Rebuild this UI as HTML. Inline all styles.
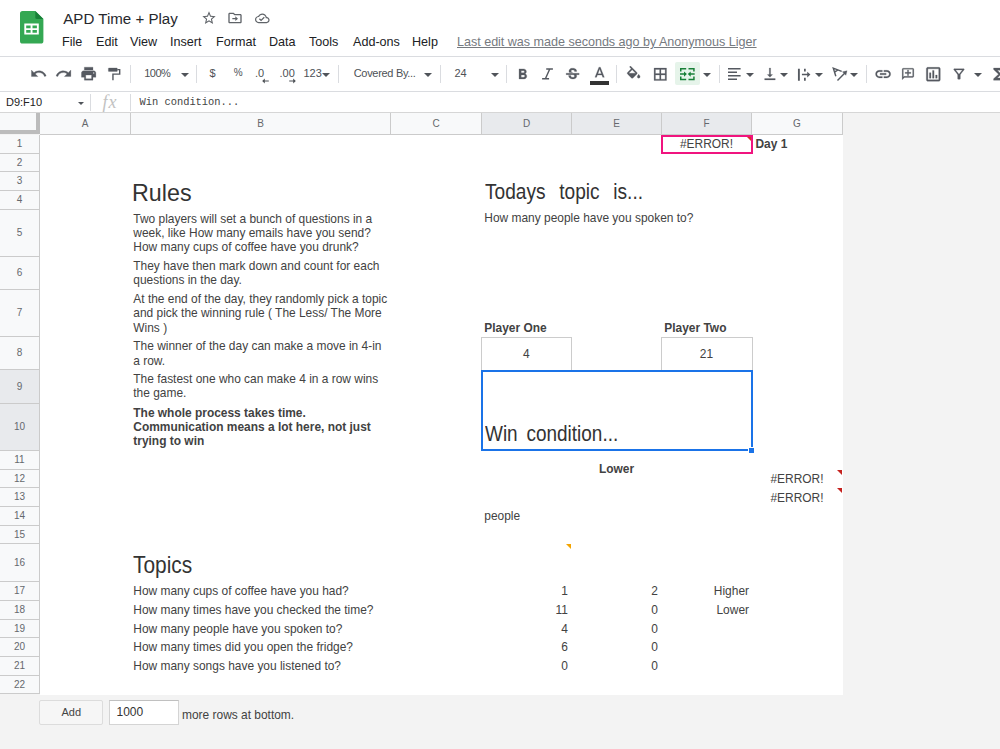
<!DOCTYPE html>
<html lang="en">
<head>
<meta charset="utf-8">
<title>APD Time + Play</title>
<style>
*{box-sizing:border-box;margin:0;padding:0}
html,body{width:1000px;height:749px;overflow:hidden;background:#fff}
body{position:relative;font-family:"Liberation Sans",Arial,sans-serif;font-size:12px;color:#333;line-height:1}
.abs{position:absolute}
.t{position:absolute;white-space:nowrap;line-height:1}
#title{left:63.3px;top:8.5px;font-size:15.1px;color:#26282c;height:20px;line-height:20px}
.menu{position:absolute;white-space:nowrap;top:35px;font-size:12.6px;color:#202124;height:15px;line-height:15px}
#lastedit{left:457px;color:#767a7f;text-decoration:underline;letter-spacing:-0.03px}
.hline{position:absolute;left:0;width:1000px;height:1px;background:#dadce0}
.sep{position:absolute;top:65px;width:1px;height:18px;background:#dadce0}
.tb{position:absolute;white-space:nowrap;color:#4d5156;font-size:11px;line-height:14px;height:14px;top:66px}
.dd{position:absolute;width:0;height:0;border-left:4.2px solid transparent;border-right:4.2px solid transparent;border-top:4.2px solid #50545a;top:72.8px;margin-left:-0.7px}
svg{position:absolute;overflow:visible}
#namebox{left:6px;top:96px;font-size:11px;color:#222;height:13px;line-height:13px}
#fx{left:102.5px;top:91.5px;font-family:"Liberation Serif",serif;font-style:italic;font-size:18px;letter-spacing:1px;color:#c2c2c2;height:20px;line-height:20px}
#formula{left:139.5px;top:96px;font-family:"Liberation Mono",monospace;font-size:10.4px;color:#444;height:13px;line-height:13px}
#gray{left:0;top:112px;width:1000px;height:637px;background:#f3f3f3}
#sheet{left:40px;top:135px;width:803px;height:560px;background:#fff}
#corner{left:0;top:112px;width:40px;height:22px;background:#f8f9fa;border-right:4px solid #bcbcbc;border-bottom:4px solid #bcbcbc;border-top:1px solid #d5d5d5}
.ch{position:absolute;top:112px;height:23px;background:#f8f9fa;border-right:1px solid #cbcbcb;border-bottom:1px solid #cbcbcb;border-top:1px solid #d5d5d5;color:#65686d;font-size:10px;text-align:center;line-height:22px}
.ch.sel,.rh.sel{background:#e8eaed}
.rh{position:absolute;left:0;width:40px;background:#f8f9fa;border-right:1px solid #cbcbcb;border-bottom:1px solid #cbcbcb;color:#65686d;font-size:10px;text-align:center}
.c{position:absolute;white-space:nowrap;font-size:11.95px;line-height:14px;height:14px;color:#424242}
.b{font-weight:bold}
.r{text-align:right}
.hw{position:absolute;white-space:nowrap;color:#333;transform-origin:0 0}
svg.ic{fill:#555960;stroke:#555960;stroke-width:0.35}
svg.ti{fill:#5f6368}
</style>
</head>
<body>
<!-- title bar -->
<svg style="left:19.6px;top:11.3px" width="23.4" height="32.5" viewBox="0 0 23.4 32.5">
  <path d="M2.6 0H15.3L23.4 8.1V29.9a2.6 2.6 0 0 1-2.6 2.6H2.6A2.6 2.6 0 0 1 0 29.9V2.6A2.6 2.6 0 0 1 2.6 0Z" fill="#34a853"/>
  <path d="M15.3 0L23.4 8.1H17a1.7 1.7 0 0 1-1.700-1.700Z" fill="#188038"/>
  <path d="M4.300 12.600H18.800V23.600H4.300Z M6.200 14.500V17.200H10.600V14.500Z M12.500 14.500V17.200H16.900V14.500Z M6.200 19V21.700H10.600V19Z M12.500 19V21.700H16.900V19Z" fill="#fff" fill-rule="evenodd"/>
</svg>
<svg class="ti" style="left:201px;top:10.100px" width="16" height="16" viewBox="0 0 24 24"><path d="M22 9.240l-7.190-.62L12 2 9.190 8.630 2 9.240l5.460 4.730L5.820 21 12 17.270 18.180 21l-1.630-7.030L22 9.240zM12 15.400l-3.760 2.270 1-4.280-3.320-2.880 4.380-.38L12 6.100l1.710 4.040 4.380.38-3.320 2.880 1 4.280L12 15.400z"/></svg>
<svg class="ti" style="left:227.400px;top:9.700px" width="16" height="16" viewBox="0 0 24 24"><path d="M20 6h-8l-2-2H4c-1.100 0-2 .9-2 2v12c0 1.100.9 2 2 2h16c1.100 0 2-.9 2-2V8c0-1.100-.9-2-2-2zm0 12H4V6h5.170l2 2H20v10zm-7.500-1.500l4-3.500-4-3.500v2.500H8v2h4.500v2.500z"/></svg>
<svg class="ti" style="left:255.400px;top:10.700px" width="14.600" height="14.600" viewBox="0 0 24 24"><path d="M19.350 10.040C18.670 6.590 15.640 4 12 4 9.110 4 6.600 5.640 5.350 8.040 2.340 8.360 0 10.910 0 14c0 3.310 2.690 6 6 6h13c2.760 0 5-2.240 5-5 0-2.640-2.050-4.780-4.650-4.960zM19 18H6c-2.210 0-4-1.790-4-4 0-2.050 1.530-3.760 3.560-3.970l1.070-.11.500-.95C8.080 7.140 9.940 6 12 6c2.620 0 4.880 1.860 5.390 4.430l.3 1.500 1.530.11c1.560.1 2.780 1.410 2.780 2.960 0 1.650-1.350 3-3 3zm-9-3.820l-2.090-2.090L6.500 13.500 10 17l6.010-6.010-1.410-1.410z"/></svg>
<div class="t" id="title">APD Time + Play</div>
<div class="menu" style="left:62px">File</div>
<div class="menu" style="left:96px">Edit</div>
<div class="menu" style="left:130px">View</div>
<div class="menu" style="left:170px">Insert</div>
<div class="menu" style="left:216px">Format</div>
<div class="menu" style="left:269px">Data</div>
<div class="menu" style="left:309px">Tools</div>
<div class="menu" style="left:353px">Add-ons</div>
<div class="menu" style="left:412px">Help</div>
<div class="menu" id="lastedit">Last edit was made seconds ago by Anonymous Liger</div>
<div class="hline" style="top:56px"></div>

<!-- toolbar -->
<svg class="ic" style="left:30.1px;top:65.2px" width="17.3" height="17.3" viewBox="0 0 24 24"><path d="M12.5 8c-2.65 0-5.05.99-6.9 2.6L2 7v9h9l-3.62-3.62c1.39-1.16 3.16-1.88 5.12-1.88 3.54 0 6.55 2.31 7.6 5.5l2.37-.78C21.08 11.03 17.15 8 12.5 8z"/></svg>
<svg class="ic" style="left:55.0px;top:65.0px" width="17.3" height="17.3" viewBox="0 0 24 24"><path d="M18.4 10.6C16.55 8.99 14.15 8 11.5 8c-4.65 0-8.58 3.03-9.96 7.22L3.9 16c1.05-3.19 4.05-5.5 7.6-5.5 1.95 0 3.73.72 5.12 1.88L13 16h9V7l-3.6 3.6z"/></svg>
<svg class="ic" style="left:79.7px;top:65.4px" width="17.3" height="17.3" viewBox="0 0 24 24"><path d="M19 8H5c-1.66 0-3 1.34-3 3v6h4v4h12v-4h4v-6c0-1.66-1.34-3-3-3zm-3 11H8v-5h8v5zm3-7c-.55 0-1-.45-1-1s.45-1 1-1 1 .45 1 1-.45 1-1 1zm-1-9H6v4h12V3z"/></svg>
<svg class="ic" style="left:105.6px;top:66px" width="16.2" height="16.2" viewBox="0 0 24 24"><path d="M4.300 2.800H16a.8.8 0 0 1 .8.8V7.300a.8.8 0 0 1-.8.8H4.300a.8.8 0 0 1-.8-.8V3.600a.8.8 0 0 1 .8-.8Z"/><path d="M16.700 5.400H20.300V12.100H10.300V21.200" fill="none" stroke="#555960" stroke-width="2.100"/></svg>
<div class="sep" style="left:130px"></div>
<div class="tb" style="left:144.3px;letter-spacing:-0.55px">100%</div>
<div class="dd" style="left:181.5px"></div>
<div class="sep" style="left:196px"></div>
<div class="tb" style="left:209.5px">$</div>
<div class="tb" style="left:233.8px;font-size:10px">%</div>
<div class="tb" style="left:255px">.0</div>
<svg style="left:262px;top:78.3px" width="7" height="6" viewBox="0 0 7 6"><path d="M2.800 0.400L0.200 3L2.800 5.600V3.600H6.800V2.400H2.800Z" fill="#4d5156"/></svg>
<div class="tb" style="left:279.5px">.00</div>
<svg style="left:288.500px;top:78.3px" width="7" height="6" viewBox="0 0 7 6"><path d="M4.200 0.400L6.800 3L4.200 5.600V3.600H0.200V2.400H4.200Z" fill="#4d5156"/></svg>
<div class="tb" style="left:303.5px">123</div>
<div class="dd" style="left:322.5px"></div>
<div class="sep" style="left:338px"></div>
<div class="tb" style="left:353.7px;letter-spacing:-0.3px">Covered By...</div>
<div class="dd" style="left:424.5px"></div>
<div class="sep" style="left:440px"></div>
<div class="tb" style="left:454.5px">24</div>
<div class="dd" style="left:491.5px"></div>
<div class="sep" style="left:506px"></div>
<svg class="ic" style="left:513.6px;top:66.4px" width="17.3" height="17.3" viewBox="0 0 24 24"><path d="M15.6 10.79c.97-.67 1.65-1.77 1.65-2.79 0-2.26-1.75-4-4-4H7v14h7.04c2.09 0 3.71-1.7 3.71-3.79 0-1.52-.86-2.82-2.15-3.42zM10 6.5h3c.83 0 1.5.67 1.5 1.5s-.67 1.5-1.5 1.5h-3v-3zm3.500 9H10v-3h3.500c.83 0 1.5.67 1.5 1.5s-.67 1.5-1.5 1.5z"/></svg>
<svg class="ic" style="left:539.1px;top:66.4px" width="17.3" height="17.3" viewBox="0 0 24 24"><path d="M10 4.200H19.300M4.300 17.600H14M14.900 4.200L8.900 17.600" fill="none" stroke="#555960" stroke-width="2"/></svg>
<svg class="ic" style="left:564.1px;top:66.4px" width="17.3" height="17.3" viewBox="0 0 24 24"><path d="M7.240 8.750c-.26-.48-.39-1.030-.39-1.670 0-.61.13-1.160.4-1.670.26-.5.63-.93 1.110-1.290.48-.35 1.050-.63 1.700-.83.66-.19 1.390-.29 2.180-.29.81 0 1.540.11 2.210.34.66.22 1.230.54 1.690.94.47.4.83.88 1.080 1.430.25.55.38 1.150.38 1.810h-3.010c0-.31-.05-.59-.15-.85-.09-.27-.24-.49-.44-.68-.2-.19-.45-.33-.75-.44-.3-.1-.66-.16-1.060-.16-.39 0-.74.04-1.030.13-.29.09-.53.21-.72.36-.19.16-.34.34-.44.55-.1.21-.15.43-.15.66 0 .48.25.88.74 1.210.38.25.77.48 1.410.7H7.390c-.05-.08-.11-.17-.15-.25zM21 12v-2H3v2h9.620c.18.07.4.14.55.2.37.17.66.34.87.51.21.17.35.36.43.57.07.2.11.43.11.69 0 .23-.05.45-.14.66-.09.2-.23.38-.42.53-.19.15-.42.26-.71.35-.29.08-.63.13-1.010.13-.43 0-.83-.04-1.180-.13s-.66-.23-.91-.42c-.25-.19-.45-.44-.59-.75-.14-.31-.25-.76-.25-1.210H6.400c0 .55.08 1.130.24 1.580.16.45.37.85.65 1.210.28.35.6.66.98.92.37.26.78.48 1.220.65.44.17.9.3 1.380.39.48.08.96.13 1.440.13.8 0 1.530-.09 2.180-.28s1.210-.45 1.670-.79c.46-.34.82-.77 1.070-1.270s.38-1.070.38-1.710c0-.6-.1-1.140-.31-1.610-.05-.11-.11-.23-.17-.33H21z"/></svg>
<svg class="ic" style="left:590.6px;top:65.0px" width="17.3" height="17.3" viewBox="0 0 24 24"><path d="M11 3L5.5 17h2.250l1.120-3h6.250l1.120 3h2.250L13 3h-2zm-1.380 9L12 5.670 14.380 12H9.620z"/></svg>
<div class="abs" style="left:590px;top:81px;width:18.5px;height:3.5px;background:#333"></div>
<div class="sep" style="left:616px"></div>
<svg class="ic" style="left:624.6px;top:66.1px" width="17.3" height="17.3" viewBox="0 0 24 24"><path d="M16.560 8.940L7.620 0 6.210 1.410l2.380 2.380-5.150 5.150c-.59.59-.59 1.540 0 2.120l5.500 5.500c.29.29.68.44 1.060.44s.77-.15 1.060-.44l5.500-5.500c.59-.58.59-1.530 0-2.120zM5.210 10L10 5.210 14.790 10H5.210zM19 11.500s-2 2.170-2 3.500c0 1.100.9 2 2 2s2-.9 2-2c0-1.330-2-3.500-2-3.500z"/></svg>
<svg class="ic" style="left:652.1px;top:65.8px" width="16.6" height="16.6" viewBox="0 0 24 24"><path d="M3 3v18h18V3H3zm8 16H5v-6h6v6zm0-8H5V5h6v6zm8 8h-6v-6h6v6zm0-8h-6V5h6v6z"/></svg>
<div class="abs" style="left:674.8px;top:62.3px;width:25.2px;height:23.2px;background:#e6f4ea;border-radius:2px"></div>
<svg style="left:679.8px;top:68px" width="14.7" height="12.2" viewBox="0 0 14.7 12.2"><path d="M0.750 3.600V0.750H6.200M13.950 3.600V0.750H8.500M0.750 8.600V11.450H6.200M13.950 8.600V11.450H8.500M0 6.100H5M14.700 6.100H9.700" fill="none" stroke="#188038" stroke-width="1.500"/><path d="M6.900 6.100L4 3.500V8.700ZM7.800 6.100L10.700 3.500V8.700Z" fill="#188038"/></svg>
<div class="dd" style="left:703.5px"></div>
<div class="sep" style="left:718.5px"></div>
<svg class="ic" style="left:728.2px;top:68.2px" width="12.6" height="12" viewBox="0 0 12.6 12"><path d="M0 0H12.600V1.600H0ZM0 3.470H9V5.070H0ZM0 6.930H12.600V8.530H0ZM0 10.400H9V12H0Z" stroke="none"/></svg>
<div class="dd" style="left:746.5px"></div>
<svg class="ic" style="left:761.6px;top:66.2px" width="15.9" height="15.9" viewBox="0 0 24 24"><path d="M16 13h-3V3h-2v10H8l4 4 4-4zM4 19v2h16v-2H4z"/></svg>
<div class="dd" style="left:780.5px"></div>
<svg class="ic" style="left:795.1px;top:65.5px" width="17.3" height="17.3" viewBox="0 0 24 24"><path d="M4.100 3.800H6.700V20.400H4.100ZM12.500 3.800H14.900V7.800H12.500ZM12.500 16.400H14.900V20.400H12.500ZM9.600 10.900H17V7.900L21.400 11.900L17 15.900V12.900H9.600Z" stroke="none"/></svg>
<div class="dd" style="left:815.5px"></div>
<svg class="ic" style="left:830.6px;top:65.5px" width="17.3" height="17.3" viewBox="0 0 24 24"><path d="M14.800 7.400L3.200 3L6.700 14.100M4.900 8.600L9.600 5.500M9 20L20 9" fill="none" stroke="#555960" stroke-width="2"/><path d="M22.300 6.500L15.800 8.100L20.700 13Z"/></svg>
<div class="dd" style="left:850.5px"></div>
<div class="sep" style="left:866px"></div>
<svg class="ic" style="left:873.8px;top:64.8px" width="18.2" height="18.2" viewBox="0 0 24 24"><path d="M3.900 12c0-1.710 1.390-3.100 3.100-3.100h4V7H7c-2.760 0-5 2.240-5 5s2.240 5 5 5h4v-1.900H7c-1.710 0-3.100-1.390-3.100-3.100zM8 13h8v-2H8v2zm9-6h-4v1.900h4c1.710 0 3.100 1.390 3.100 3.100s-1.390 3.100-3.100 3.100h-4V17h4c2.760 0 5-2.240 5-5s-2.240-5-5-5z"/></svg>
<svg class="ic" style="left:901px;top:66.9px" width="14" height="14" viewBox="0 0 24 24"><g transform="translate(24,0) scale(-1,1)"><path d="M22 4c0-1.100-.9-2-2-2H4c-1.100 0-2 .9-2 2v12c0 1.100.9 2 2 2h14l4 4V4zm-2 13.170L18.830 16H4V4h16v13.170zM13 5h-2v4H7v2h4v4h2v-4h4V9h-4z"/></g></svg>
<svg class="ic" style="left:923.95px;top:64.8px" width="18.6" height="18.6" viewBox="0 0 24 24"><path d="M9 17H7v-7h2v7zm4 0h-2V7h2v10zm4 0h-2v-4h2v4zm2 2H5V5h14v14zm0-16H5c-1.100 0-2 .9-2 2v14c0 1.100.9 2 2 2h14c1.100 0 2-.9 2-2V5c0-1.100-.9-2-2-2z"/></svg>
<svg class="ic" style="left:951.4px;top:66.1px" width="16" height="16" viewBox="0 0 24 24"><path d="M7 6h10l-5.010 6.300L7 6zm-2.750-.39C6.270 8.200 10 13 10 13v6c0 .55.45 1 1 1h2c.55 0 1-.45 1-1v-6s3.720-4.800 5.740-7.390c.51-.66.04-1.610-.79-1.610H5.040c-.83 0-1.300.95-.79 1.610z"/></svg>
<div class="dd" style="left:974.5px"></div>
<svg class="ic" style="left:988.8px;top:64.65px" width="18.3" height="18.3" viewBox="0 0 24 24"><path d="M18 4H6v2l6.500 6L6 18v2h12v-3h-7l5-5-5-5h7z"/></svg>
<div class="hline" style="top:91px"></div>

<!-- formula bar -->
<div class="t" id="namebox">D9:F10</div>
<div class="dd" style="left:78.5px;top:101.8px;border-left-width:3px;border-right-width:3px;border-top-width:3px"></div>
<div class="sep" style="left:90px;top:94px;height:17px"></div>
<div class="t" id="fx">fx</div>
<div class="sep" style="left:130px;top:94px;height:17px"></div>
<div class="t" id="formula">Win condition...</div>

<div class="abs" id="gray"></div>
<div class="abs" id="sheet"></div>
<div class="abs" id="corner"></div>
<div class="ch" style="left:40px;width:91px">A</div>
<div class="ch" style="left:131px;width:260px">B</div>
<div class="ch" style="left:391px;width:91px">C</div>
<div class="ch sel" style="left:482px;width:90px">D</div>
<div class="ch sel" style="left:572px;width:90px">E</div>
<div class="ch sel" style="left:662px;width:90px">F</div>
<div class="ch" style="left:752px;width:91px">G</div>
<div class="rh" style="top:135px;height:19px;line-height:18px">1</div>
<div class="rh" style="top:154px;height:18px;line-height:17px">2</div>
<div class="rh" style="top:172px;height:19px;line-height:18px">3</div>
<div class="rh" style="top:191px;height:19px;line-height:18px">4</div>
<div class="rh" style="top:210px;height:47px;line-height:46px">5</div>
<div class="rh" style="top:257px;height:33px;line-height:32px">6</div>
<div class="rh" style="top:290px;height:47px;line-height:46px">7</div>
<div class="rh" style="top:337px;height:33px;line-height:32px">8</div>
<div class="rh sel" style="top:370px;height:34px;line-height:33px">9</div>
<div class="rh sel" style="top:404px;height:47px;line-height:46px">10</div>
<div class="rh" style="top:451px;height:19px;line-height:18px">11</div>
<div class="rh" style="top:470px;height:18px;line-height:17px">12</div>
<div class="rh" style="top:488px;height:19px;line-height:18px">13</div>
<div class="rh" style="top:507px;height:19px;line-height:18px">14</div>
<div class="rh" style="top:526px;height:18px;line-height:17px">15</div>
<div class="rh" style="top:544px;height:38px;line-height:37px">16</div>
<div class="rh" style="top:582px;height:19px;line-height:18px">17</div>
<div class="rh" style="top:601px;height:19px;line-height:18px">18</div>
<div class="rh" style="top:620px;height:18px;line-height:17px">19</div>
<div class="rh" style="top:638px;height:19px;line-height:18px">20</div>
<div class="rh" style="top:657px;height:19px;line-height:18px">21</div>
<div class="rh" style="top:676px;height:18px;line-height:17px">22</div>
<!-- cells -->
<div class="c" style="left:133.3px;top:212px;">Two players will set a bunch of questions in a</div>
<div class="c" style="left:133.3px;top:226px;">week, like How many emails have you send?</div>
<div class="c" style="left:133.3px;top:240px;">How many cups of coffee have you drunk?</div>
<div class="c" style="left:133.3px;top:259px;">They have then mark down and count for each</div>
<div class="c" style="left:133.3px;top:273px;">questions in the day.</div>
<div class="c" style="left:133.3px;top:292px;">At the end of the day, they randomly pick a topic</div>
<div class="c" style="left:133.3px;top:306px;">and pick the winning rule ( The Less/ The More</div>
<div class="c" style="left:133.3px;top:321px;">Wins )</div>
<div class="c" style="left:133.3px;top:339px;">The winner of the day can make a move in 4-in</div>
<div class="c" style="left:133.3px;top:354px;">a row.</div>
<div class="c" style="left:133.3px;top:372px;">The fastest one who can make 4 in a row wins</div>
<div class="c" style="left:133.3px;top:386px;">the game.</div>
<div class="c b" style="left:133.3px;top:406px;">The whole process takes time.</div>
<div class="c b" style="left:133.3px;top:420px;">Communication means a lot here, not just</div>
<div class="c b" style="left:133.3px;top:434px;">trying to win</div>
<div class="c" style="left:133.3px;top:584px;">How many cups of coffee have you had?</div>
<div class="c" style="left:133.3px;top:603px;">How many times have you checked the time?</div>
<div class="c" style="left:133.3px;top:622px;">How many people have you spoken to?</div>
<div class="c" style="left:133.3px;top:640px;">How many times did you open the fridge?</div>
<div class="c" style="left:133.3px;top:659px;">How many songs have you listened to?</div>
<div class="c" style="left:484.3px;top:211px;">How many people have you spoken to?</div>
<div class="c b" style="left:484.3px;top:321px;">Player One</div>
<div class="c b" style="left:664.3px;top:321px;">Player Two</div>
<div class="abs" style="left:481px;top:336.5px;width:91px;height:34px;border:1px solid #ccc;border-bottom:none"></div>
<div class="abs" style="left:661px;top:336.5px;width:91.5px;height:34px;border:1px solid #ccc;border-bottom:none"></div>
<div class="c" style="left:481.29999999999995px;width:90px;text-align:center;top:347.00px">4</div>
<div class="c" style="left:661.5px;width:90px;text-align:center;top:347.00px">21</div>
<div class="abs" style="left:481px;top:370px;width:272px;height:81px;border:2px solid #1a73e8"></div>
<div class="abs" style="left:748px;top:446.5px;width:7px;height:7px;background:#1a73e8;border:1px solid #fff"></div>
<div class="c b" style="left:571.5px;width:90px;text-align:center;top:462.00px">Lower</div>
<div class="c" style="left:484.3px;top:509px;">people</div>
<div class="abs" style="left:661px;top:135px;width:92px;height:19px;border:2px solid #f0147f"></div>
<div class="c" style="left:661.5px;width:90px;text-align:center;top:137.00px">#ERROR!</div>
<div class="c b" style="left:755.5px;top:137px;">Day 1</div>
<div class="c" style="left:752.0px;width:90px;text-align:center;top:472.00px">#ERROR!</div>
<div class="c" style="left:752.0px;width:90px;text-align:center;top:491.00px">#ERROR!</div>
<div class="abs" style="left:746.5px;top:136.5px;width:0;height:0;border-top:4.5px solid #d93025;border-left:4.5px solid transparent"></div>
<div class="abs" style="left:837.0px;top:469.5px;width:0;height:0;border-top:5.5px solid #c5221f;border-left:5.5px solid transparent"></div>
<div class="abs" style="left:837.0px;top:488.3px;width:0;height:0;border-top:5.5px solid #c5221f;border-left:5.5px solid transparent"></div>
<div class="abs" style="left:566.2px;top:544.2px;width:0;height:0;border-top:5px solid #f4a400;border-left:5px solid transparent"></div>
<div class="c r" style="right:432px;top:584.00px">1</div>
<div class="c r" style="right:342px;top:584.00px">2</div>
<div class="c r" style="right:432px;top:603.00px">11</div>
<div class="c r" style="right:342px;top:603.00px">0</div>
<div class="c r" style="right:432px;top:622.00px">4</div>
<div class="c r" style="right:342px;top:622.00px">0</div>
<div class="c r" style="right:432px;top:640.00px">6</div>
<div class="c r" style="right:342px;top:640.00px">0</div>
<div class="c r" style="right:432px;top:659.00px">0</div>
<div class="c r" style="right:342px;top:659.00px">0</div>
<div class="c r" style="right:251px;top:584.00px">Higher</div>
<div class="c r" style="right:251px;top:603.00px">Lower</div>
<div class="hw" id="h1" style="left:132px;top:180.68px;font-size:24px;line-height:24px;transform:scaleX(0.97);word-spacing:0px">Rules</div>
<div class="hw" id="h2" style="left:133.3px;top:553.28px;font-size:24px;line-height:24px;transform:scaleX(0.87);word-spacing:0px">Topics</div>
<div class="hw" id="h3" style="left:484.6px;top:180.85px;font-size:22.5px;line-height:22.5px;transform:scaleX(0.85);word-spacing:9.8px">Todays topic is...</div>
<div class="hw" id="h4" style="left:485px;top:422.95px;font-size:22.5px;line-height:22.5px;transform:scaleX(0.843);word-spacing:4.2px">Win condition...</div>

<!-- footer -->
<div class="abs" style="left:39.3px;top:700px;width:64px;height:25.3px;background:#f6f6f6;border:1px solid #dcdcdc;border-radius:2px;text-align:center;font-size:11px;line-height:22px;color:#444">Add</div>
<div class="abs" style="left:109px;top:700px;width:69.7px;height:25.3px;background:#fff;border:1px solid #d4d4d4;border-top-color:#c0c0c0;font-size:12px;line-height:22.5px;color:#333;padding-left:6.5px">1000</div>
<div class="c" style="left:182px;top:708px">more rows at bottom.</div>
<div class="hline" style="top:112px;background:#d6d6d6"></div>

</body>
</html>
